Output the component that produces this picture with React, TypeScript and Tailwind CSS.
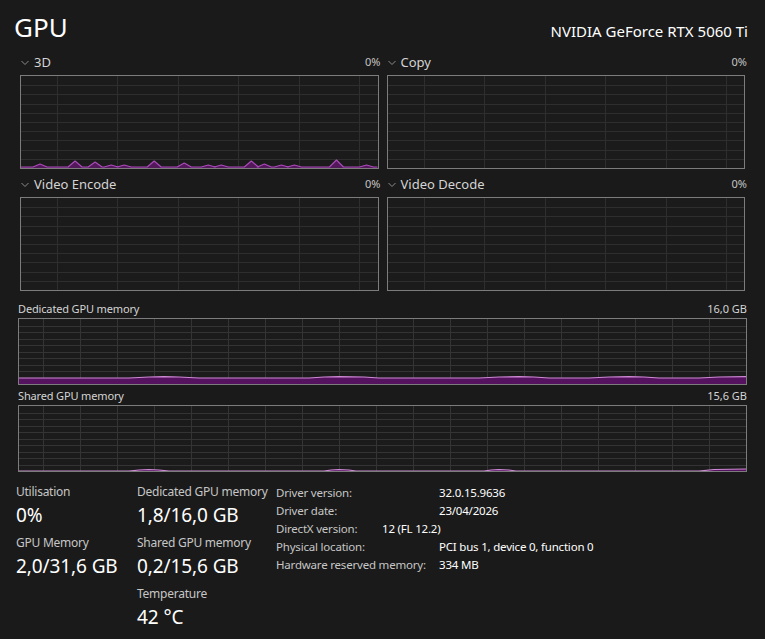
import React from 'react'

type Pt = [number, number]

function Grid({ w, h, step, offset, rows, color }: { w: number; h: number; step: number; offset: number; rows: number; color: string }) {
  const xs: number[] = []
  for (let x = offset; x < w; x += step) xs.push(Math.round(x) + 0.5)
  const ys: number[] = []
  for (let i = 1; i < rows; i++) ys.push(Math.round((h / rows) * i) + 0.5)
  return (
    <g shapeRendering="crispEdges" stroke={color} strokeWidth={1}>
      {xs.map((x) => (
        <line key={'v' + x} x1={x} y1={0} x2={x} y2={h} />
      ))}
      {ys.map((y) => (
        <line key={'h' + y} x1={0} y1={y} x2={w} y2={y} />
      ))}
    </g>
  )
}

function Spark({ pts, h, stroke, fill }: { pts: Pt[]; h: number; stroke: string; fill: string }) {
  if (!pts.length) return null
  const line = pts.map((p) => p.join(',')).join(' ')
  const area = `${pts[0][0]},${h} ${line} ${pts[pts.length - 1][0]},${h}`
  return (
    <g>
      <polygon points={area} fill={fill} />
      <polyline points={line} fill="none" stroke={stroke} strokeWidth={1.2} strokeLinejoin="round" />
    </g>
  )
}

// 3D engine history, local coords inside a 356x92 box
const peaks3d: [number, number][] = [
  [19, 3], [54, 6], [74, 5], [90, 2], [103, 2], [133, 6], [163, 4], [187, 2], [200, 2], [230, 6], [243, 3], [260, 2], [273, 2], [315, 7], [345, 2],
]
function build3d(): Pt[] {
  const base = 91
  const pts: Pt[] = [[0, base]]
  peaks3d.forEach(([x, hh]) => {
    pts.push([x - 7, base])
    pts.push([x, base - hh])
    pts.push([x + 7, base])
  })
  pts.push([356, base])
  return pts
}

function EngineGraph({ label, value, data }: { label: string; value: string; data?: Pt[] }) {
  return (
    <div className="flex flex-col">
      <div className="flex h-[22px] items-start justify-between">
        <div className="flex items-center gap-[5px] leading-[18px]">
          <svg width="8" height="6" viewBox="0 0 8 6" className="ml-[1px] mt-[1px]">
            <path d="M0.5 1 L4 4.5 L7.5 1" fill="none" stroke="#8a8a8a" strokeWidth="1" />
          </svg>
          <span className="text-[13px] text-[#d4d4d4]">{label}</span>
        </div>
        <span className="mr-[-2px] text-[11px] leading-[18px] text-[#c4c4c4]">{value}</span>
      </div>
      <div className="h-[94px] border border-[#7c7c7c] bg-[#1b1b1b]">
        <svg width="100%" height="92" viewBox="0 0 356 92" preserveAspectRatio="none" className="block">
          <Grid w={356} h={92} step={60.4} offset={36} rows={10} color="#2e2e2e" />
          {data && <Spark pts={data} h={92} stroke="#a94ab8" fill="#52185a" />}
        </svg>
      </div>
    </div>
  )
}

function MemGraph({ label, value, data }: { label: string; value: string; data: Pt[] }) {
  return (
    <div className="flex flex-col">
      <div className="flex h-[18px] items-center justify-between">
        <span className="text-[11px] tracking-[-0.15px] text-[#d4d4d4]">{label}</span>
        <span className="text-[11px] text-[#d4d4d4]">{value}</span>
      </div>
      <div className="h-[67px] border border-[#7c7c7c] bg-[#1b1b1b]">
        <svg width="100%" height="65" viewBox="0 0 727 65" preserveAspectRatio="none" className="block">
          <Grid w={727} h={65} step={37} offset={24} rows={10} color="#343434" />
          <Spark pts={data} h={65} stroke="#cf8ad6" fill="#55125e" />
        </svg>
      </div>
    </div>
  )
}

const dedicated: Pt[] = [
  [0, 59], [110, 59], [130, 58], [145, 57.6], [160, 58], [180, 59], [290, 59], [305, 58], [320, 57.6], [345, 58], [360, 59],
  [460, 59], [480, 58], [500, 57.6], [515, 58], [530, 59], [570, 59], [590, 58], [610, 57.6], [625, 58], [640, 59], [680, 59], [700, 58], [727, 57.6],
]
const shared: Pt[] = [
  [0, 65], [110, 65], [120, 64], [130, 63.5], [140, 64], [150, 65], [305, 65], [312, 64], [320, 63.5], [330, 64], [337, 65],
  [465, 65], [472, 64], [480, 63.5], [490, 64], [497, 65], [680, 65], [695, 63.5], [727, 63],
]

function Stat({ label, value }: { label: string; value: string }) {
  return (
    <div className="flex flex-col">
      <span className="text-[12px] leading-[16px] tracking-[-0.25px] text-[#c6c6c6]">{label}</span>
      <span className="text-[19px] leading-[30px] tracking-[-0.1px] text-white">{value}</span>
    </div>
  )
}

const details: [string, string, number][] = [
  ['Driver version:', '32.0.15.9636', 163],
  ['Driver date:', '23/04/2026', 163],
  ['DirectX version:', '12 (FL 12.2)', 106],
  ['Physical location:', 'PCI bus 1, device 0, function 0', 163],
  ['Hardware reserved memory:', '334 MB', 163],
]

export default function App() {
  return (
    <div
      className="h-[639px] w-[765px] overflow-hidden bg-[#1a1a1a] text-white"
      style={{ fontFamily: '"Noto Sans", "Open Sans", sans-serif' }}
    >
      <div className="flex h-[53px] items-start justify-between pl-[14px] pr-[17px]">
        <span className="mt-[9px] text-[26px] leading-[36px] text-white">GPU</span>
        <span className="mt-[20px] text-[15px] leading-[22px] text-white">NVIDIA GeForce RTX 5060 Ti</span>
      </div>

      <div className="grid grid-cols-2 gap-x-[8px] gap-y-[6px] pl-[20px] pr-[20px]">
        <EngineGraph label="3D" value="0%" data={build3d()} />
        <EngineGraph label="Copy" value="0%" />
        <EngineGraph label="Video Encode" value="0%" />
        <EngineGraph label="Video Decode" value="0%" />
      </div>

      <div className="mt-[9px] flex flex-col gap-[2px] pl-[18px] pr-[18px]">
        <MemGraph label="Dedicated GPU memory" value="16,0 GB" data={dedicated} />
        <MemGraph label="Shared GPU memory" value="15,6 GB" data={shared} />
      </div>

      <div className="mt-[12px] flex pl-[16px]">
        <div className="flex w-[121px] flex-col gap-[5px]">
          <Stat label="Utilisation" value="0%" />
          <Stat label="GPU Memory" value="2,0/31,6 GB" />
        </div>
        <div className="flex w-[139px] flex-col gap-[5px]">
          <Stat label="Dedicated GPU memory" value="1,8/16,0 GB" />
          <Stat label="Shared GPU memory" value="0,2/15,6 GB" />
          <Stat label="Temperature" value="42 °C" />
        </div>
        <div className="flex flex-col">
          {details.map(([k, v, w]) => (
            <div key={k} className="flex text-[11.5px] leading-[18px] tracking-[-0.2px]">
              <span className="shrink-0 text-[#c6c6c6]" style={{ width: w }}>{k}</span>
              <span className="text-white">{v}</span>
            </div>
          ))}
        </div>
      </div>
    </div>
  )
}
